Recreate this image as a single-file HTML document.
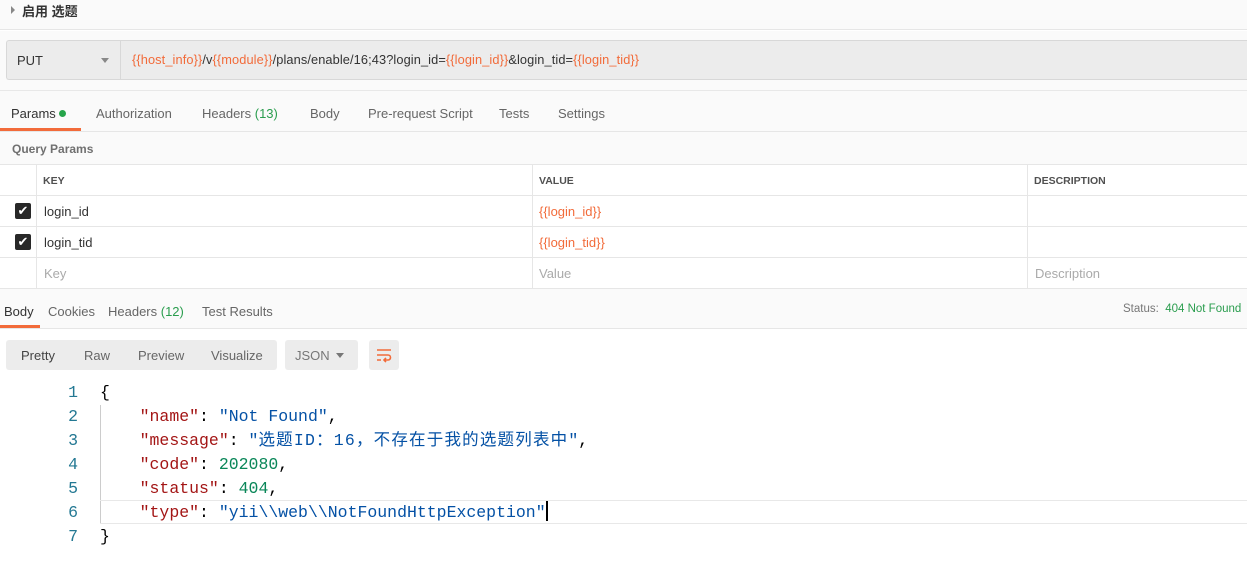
<!DOCTYPE html><html><head><meta charset="utf-8"><style>
*{box-sizing:border-box;margin:0;padding:0}
body{width:1247px;height:575px;overflow:hidden;background:#fff;font-family:"Liberation Sans","Noto Sans CJK SC",sans-serif;font-size:13px;color:#505050;position:relative}
.a{position:absolute}
.o{color:#f26b3a}
.g{color:#2a9d4e}
.th{font-size:10.5px;font-weight:bold;color:#505050}
.code{font-family:"Liberation Mono","Noto Sans CJK SC",monospace;font-size:16.5px;white-space:pre}
.k{color:#a31515}.s{color:#0451a5}.n{color:#098658}.p{color:#000}
.ln{color:#237893;width:30px;text-align:right;left:48px}
</style></head><body>
<div class="a" style="left:0;top:0;width:1247px;height:30px;background:#fafafa;border-bottom:1px solid #e6e6e6"></div>
<div class="a" style="left:11px;top:6px;width:0;height:0;border-left:4px solid #888;border-top:4px solid transparent;border-bottom:4px solid transparent;top:6px"></div>
<div class="a" style="left:22px;top:1px;font-size:13px;font-weight:bold;color:#333">启用 选题</div>
<div class="a" style="left:0;top:31px;width:1247px;height:100px;background:#fafafa"></div>
<div class="a" style="left:6px;top:40px;width:1241px;height:40px;background:#ececec;border:1px solid #d8d8d8;border-right:none;border-radius:3px 0 0 3px"></div>
<div class="a" style="left:120px;top:41px;width:1px;height:38px;background:#d8d8d8"></div>
<div class="a" style="left:17px;top:53px;font-size:13px;color:#333">PUT</div>
<div class="a" style="left:101px;top:58px;border-top:5px solid #888;border-left:4px solid transparent;border-right:4px solid transparent"></div>
<div class="a" style="left:132px;top:52px;font-size:12.8px;color:#333;letter-spacing:0.1px"><span class="o">{{host_info}}</span>/v<span class="o">{{module}}</span>/plans/enable/16;43?login_id=<span class="o">{{login_id}}</span>&amp;login_tid=<span class="o">{{login_tid}}</span></div>
<div class="a" style="left:0;top:90px;width:1247px;height:1px;background:#e8e8e8"></div>
<div class="a" style="left:11px;top:106px;color:#333">Params <span style="display:inline-block;width:7px;height:7px;border-radius:50%;background:#26a44a;vertical-align:1px"></span></div>
<div class="a" style="left:0;top:128px;width:81px;height:3px;background:#f26b3a"></div>
<div class="a" style="left:96px;top:106px;color:#666">Authorization</div>
<div class="a" style="left:202px;top:106px;color:#666">Headers <span class="g">(13)</span></div>
<div class="a" style="left:310px;top:106px;color:#666">Body</div>
<div class="a" style="left:368px;top:106px;color:#666">Pre-request Script</div>
<div class="a" style="left:499px;top:106px;color:#666">Tests</div>
<div class="a" style="left:558px;top:106px;color:#666">Settings</div>
<div class="a" style="left:0;top:131px;width:1247px;height:34px;background:#fafafa;border-top:1px solid #e6e6e6;border-bottom:1px solid #e6e6e6"></div>
<div class="a" style="left:12px;top:142px;font-weight:bold;color:#707070;font-size:12px">Query Params</div>
<div class="a" style="left:0;top:195px;width:1247px;height:1px;background:#e6e6e6"></div>
<div class="a" style="left:0;top:226px;width:1247px;height:1px;background:#e6e6e6"></div>
<div class="a" style="left:0;top:257px;width:1247px;height:1px;background:#e6e6e6"></div>
<div class="a" style="left:0;top:288px;width:1247px;height:1px;background:#e6e6e6"></div>
<div class="a" style="left:36px;top:165px;width:1px;height:124px;background:#e6e6e6"></div>
<div class="a" style="left:532px;top:165px;width:1px;height:124px;background:#e6e6e6"></div>
<div class="a" style="left:1027px;top:165px;width:1px;height:124px;background:#e6e6e6"></div>
<div class="a th" style="left:43px;top:175px">KEY</div>
<div class="a th" style="left:539px;top:175px">VALUE</div>
<div class="a th" style="left:1034px;top:175px">DESCRIPTION</div>
<div class="a" style="left:15px;top:203px;width:16px;height:16px;background:#282828;border-radius:2px;color:#fff;font-size:13px;line-height:16px;text-align:center">✔</div>
<div class="a" style="left:15px;top:234px;width:16px;height:16px;background:#282828;border-radius:2px;color:#fff;font-size:13px;line-height:16px;text-align:center">✔</div>
<div class="a" style="left:44px;top:204px;color:#333">login_id</div>
<div class="a" style="left:44px;top:235px;color:#333">login_tid</div>
<div class="a o" style="left:539px;top:204px">{{login_id}}</div>
<div class="a o" style="left:539px;top:235px">{{login_tid}}</div>
<div class="a" style="left:44px;top:266px;color:#aaa">Key</div>
<div class="a" style="left:539px;top:266px;color:#aaa">Value</div>
<div class="a" style="left:1035px;top:266px;color:#aaa">Description</div>
<div class="a" style="left:0;top:289px;width:1247px;height:40px;background:#fafafa;border-bottom:1px solid #e6e6e6"></div>
<div class="a" style="left:4px;top:304px;color:#333">Body</div>
<div class="a" style="left:0;top:325px;width:40px;height:3px;background:#f26b3a"></div>
<div class="a" style="left:48px;top:304px;color:#666">Cookies</div>
<div class="a" style="left:108px;top:304px;color:#666">Headers <span class="g">(12)</span></div>
<div class="a" style="left:202px;top:304px;color:#666">Test Results</div>
<div class="a" style="left:1123px;top:303px;font-size:11.5px;color:#777">Status: <span class="g">&nbsp;404 Not Found</span></div>
<div class="a" style="left:6px;top:340px;width:271px;height:30px;background:#ececec;border-radius:3px"></div>
<div class="a" style="left:21px;top:348px;color:#444">Pretty</div>
<div class="a" style="left:84px;top:348px;color:#666">Raw</div>
<div class="a" style="left:138px;top:348px;color:#666">Preview</div>
<div class="a" style="left:211px;top:348px;color:#666">Visualize</div>
<div class="a" style="left:285px;top:340px;width:73px;height:30px;background:#ececec;border-radius:3px"></div>
<div class="a" style="left:295px;top:348px;color:#777">JSON</div>
<div class="a" style="left:336px;top:353px;border-top:5px solid #777;border-left:4px solid transparent;border-right:4px solid transparent"></div>
<div class="a" style="left:369px;top:340px;width:30px;height:30px;background:#ececec;border-radius:3px"></div>
<svg class="a" style="left:376px;top:347px" width="16" height="16" viewBox="0 0 16 16" fill="none" stroke="#f26b3a" stroke-width="1.6"><path d="M1 3h14M1 8h11a2.5 2.5 0 0 1 0 5H8M10 11l-2 2 2 2M1 13h4"/></svg>
<div class="a" style="left:100px;top:405px;width:1px;height:118px;background:#ccc"></div>
<div class="a" style="left:100px;top:500px;width:1147px;height:24px;border-top:1px solid #e8e8e8;border-bottom:1px solid #e8e8e8"></div>
<div class="a code ln" style="top:381px;line-height:24px">1
2
3
4
5
6
7</div>
<div class="a code" style="left:100px;top:381px;line-height:24px"><span class="p">{</span>
    <span class="k">"name"</span><span class="p">: </span><span class="s">"Not Found"</span><span class="p">,</span>
    <span class="k">"message"</span><span class="p">: </span><span class="s">"<span style="letter-spacing:1.2px">选题ID：16，不存在于我的选题列表中</span>"</span><span class="p">,</span>
    <span class="k">"code"</span><span class="p">: </span><span class="n">202080</span><span class="p">,</span>
    <span class="k">"status"</span><span class="p">: </span><span class="n">404</span><span class="p">,</span>
    <span class="k">"type"</span><span class="p">: </span><span class="s">"yii\\web\\NotFoundHttpException"</span><span style="display:inline-block;width:2px;height:20px;background:#000;vertical-align:-4px"></span>
<span class="p">}</span></div>
</body></html>
